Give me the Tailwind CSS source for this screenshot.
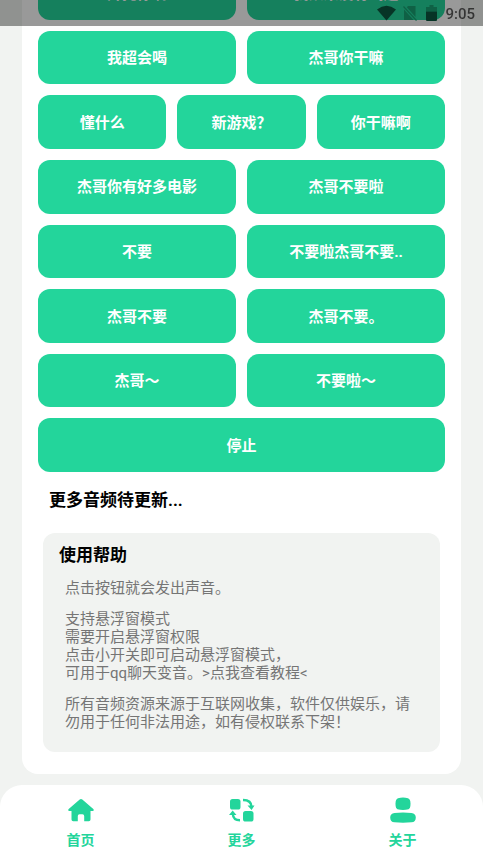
<!DOCTYPE html>
<html lang="zh-CN">
<head>
<meta charset="utf-8">
<meta name="viewport" content="width=device-width, initial-scale=1">
<title>音频按钮</title>
<script src="https://cdn.jsdelivr.net/npm/@tailwindcss/browser@4"></script>
</head>
<body class="flex h-screen flex-col overflow-hidden bg-[#f1f3f1] font-['Roboto','Noto_Sans_CJK_SC',sans-serif] text-black">

<!-- Status bar, laid over the scrolled content -->
<header class="fixed inset-x-0 top-0 z-10 flex h-[26px] items-center justify-end bg-black/40 pr-2 text-black/65">
  <svg class="mr-[7px] h-[16px] w-[19px]" viewBox="0 0 19 16" aria-hidden="true"><path d="M0 4.4Q9.500-3 19 4.400L9.500 15.500Z" fill="#073426"/></svg>
  <svg class="mr-[9px] h-[16px] w-[14px]" viewBox="0 0 14 16" aria-hidden="true"><path d="M5 1h7.500v11L3.800 2.200ZM1 4.500l9.500 10.500H1Z" fill="#0f6145"/><path d="M.5 1.500l13 14" stroke="#0f6145" stroke-width="1.200"/></svg>
  <svg class="mr-2 h-[16px] w-[11px]" viewBox="0 0 11 16" aria-hidden="true"><path d="M3.500 0h4v2H11v4.500H0V2h3.500Z" fill="#0f6145"/><path d="M0 6.500h11V15q0 1-1 1H1q-1 0-1-1Z" fill="#073426"/></svg>
  <time class="pt-[2px] text-[15px] font-medium leading-6">9:05</time>
</header>

<main class="flex min-h-0 flex-1 flex-col justify-end overflow-hidden px-[22px] pb-[11px]">
  <section class="rounded-b-[16px] bg-white px-4 pb-[22px]">
    <div class="grid h-[506px] grid-cols-6 grid-rows-8 gap-[11px] text-[15px] font-bold text-white *:pt-[2px]">
      <button type="button" class="col-span-3 rounded-xl bg-[#23d59b]">拜托你啊</button>
      <button type="button" class="col-span-3 rounded-xl bg-[#23d59b]">我从来没有喝过</button>
      <button type="button" class="col-span-3 rounded-xl bg-[#23d59b]">我超会喝</button>
      <button type="button" class="col-span-3 rounded-xl bg-[#23d59b]">杰哥你干嘛</button>
      <button type="button" class="col-span-2 rounded-xl bg-[#23d59b]">懂什么</button>
      <button type="button" class="col-span-2 rounded-xl bg-[#23d59b]">新游戏？</button>
      <button type="button" class="col-span-2 rounded-xl bg-[#23d59b]">你干嘛啊</button>
      <button type="button" class="col-span-3 rounded-xl bg-[#23d59b]">杰哥你有好多电影</button>
      <button type="button" class="col-span-3 rounded-xl bg-[#23d59b]">杰哥不要啦</button>
      <button type="button" class="col-span-3 rounded-xl bg-[#23d59b]">不要</button>
      <button type="button" class="col-span-3 rounded-xl bg-[#23d59b]">不要啦杰哥不要..</button>
      <button type="button" class="col-span-3 rounded-xl bg-[#23d59b]">杰哥不要</button>
      <button type="button" class="col-span-3 rounded-xl bg-[#23d59b]">杰哥不要。</button>
      <button type="button" class="col-span-3 rounded-xl bg-[#23d59b]">杰哥～</button>
      <button type="button" class="col-span-3 rounded-xl bg-[#23d59b]">不要啦～</button>
      <button type="button" class="col-span-6 rounded-xl bg-[#23d59b]">停止</button>
    </div>

    <h2 class="mt-4 pl-[11px] text-[17px] font-bold leading-6">更多音频待更新...</h2>

    <article class="mx-[5px] mt-[21px] rounded-xl bg-[#f1f3f1] px-4 pt-[10px] pb-[21px]">
      <h2 class="text-[17px] font-bold leading-6">使用帮助</h2>
      <div class="mt-3 flex flex-col gap-[13px] px-[6px] text-[15px] leading-[18px] text-[#757575]">
        <p>点击按钮就会发出声音。</p>
        <p>支持悬浮窗模式<br>需要开启悬浮窗权限<br>点击小开关即可启动悬浮窗模式，<br>可用于qq聊天变音。<a href="#tutorial">&gt;点我查看教程&lt;</a></p>
        <p>所有音频资源来源于互联网收集，软件仅供娱乐，请勿用于任何非法用途，如有侵权联系下架！</p>
      </div>
    </article>
  </section>
</main>

<nav class="grid h-[75px] shrink-0 grid-cols-3 rounded-t-[22px] bg-white text-[14px] font-bold leading-5 text-[#23d59b]">
  <a href="#home" class="flex flex-col items-center gap-[6px] pt-[11px]">
    <svg class="size-7" viewBox="0 0 28 28" fill="currentColor" aria-hidden="true"><path d="M12.700 3.600q1.300-1 2.600 0L26.300 13q1.300 1.600-.6 2h-2.200v8.500q0 1.700-1.700 1.700h-4.600V20q0-1.700-1.700-1.700h-3Q10.800 18.300 10.800 20v5.200H6.200q-1.700 0-1.700-1.700V15H2.300q-1.900-.4-.6-2Z"/></svg>
    首页
  </a>
  <a href="#more" class="flex flex-col items-center gap-[6px] pt-[11px]">
    <svg class="size-7" viewBox="0 0 28 28" fill="currentColor" aria-hidden="true"><rect x="2" y="3" width="10.500" height="10.500" rx="2.600"/><rect x="15" y="15" width="10.500" height="10.500" rx="2.600"/><path d="M15 4q8.500 0 8.500 7" fill="none" stroke="currentColor" stroke-width="2.400"/><path d="M19.500 9.500h7L23.600 14ZM1 19l3.700-4.500L8.500 19Z"/><path d="M4.800 18q.4 6.300 7.200 6.300" fill="none" stroke="currentColor" stroke-width="2.400"/></svg>
    更多
  </a>
  <a href="#about" class="flex flex-col items-center gap-[6px] pt-[11px]">
    <svg class="size-7" viewBox="0 0 28 28" fill="currentColor" aria-hidden="true"><path d="M9 2.200Q14 .8 19 2.200Q21.500 3.200 21.500 7.500Q21.500 12.500 19.500 13.200Q14 14.600 8.500 13.200Q6.500 12.500 6.500 7.500Q6.500 3.200 9 2.200Z"/><path d="M5.500 17.100Q14 15.800 22.500 17.100Q26.800 18 26.800 21.500Q26.800 26 22.500 26.300Q14 27.200 5.500 26.300Q1.200 26 1.200 21.500Q1.200 18 5.500 17.100Z"/></svg>
    关于
  </a>
</nav>
</body>
</html>
